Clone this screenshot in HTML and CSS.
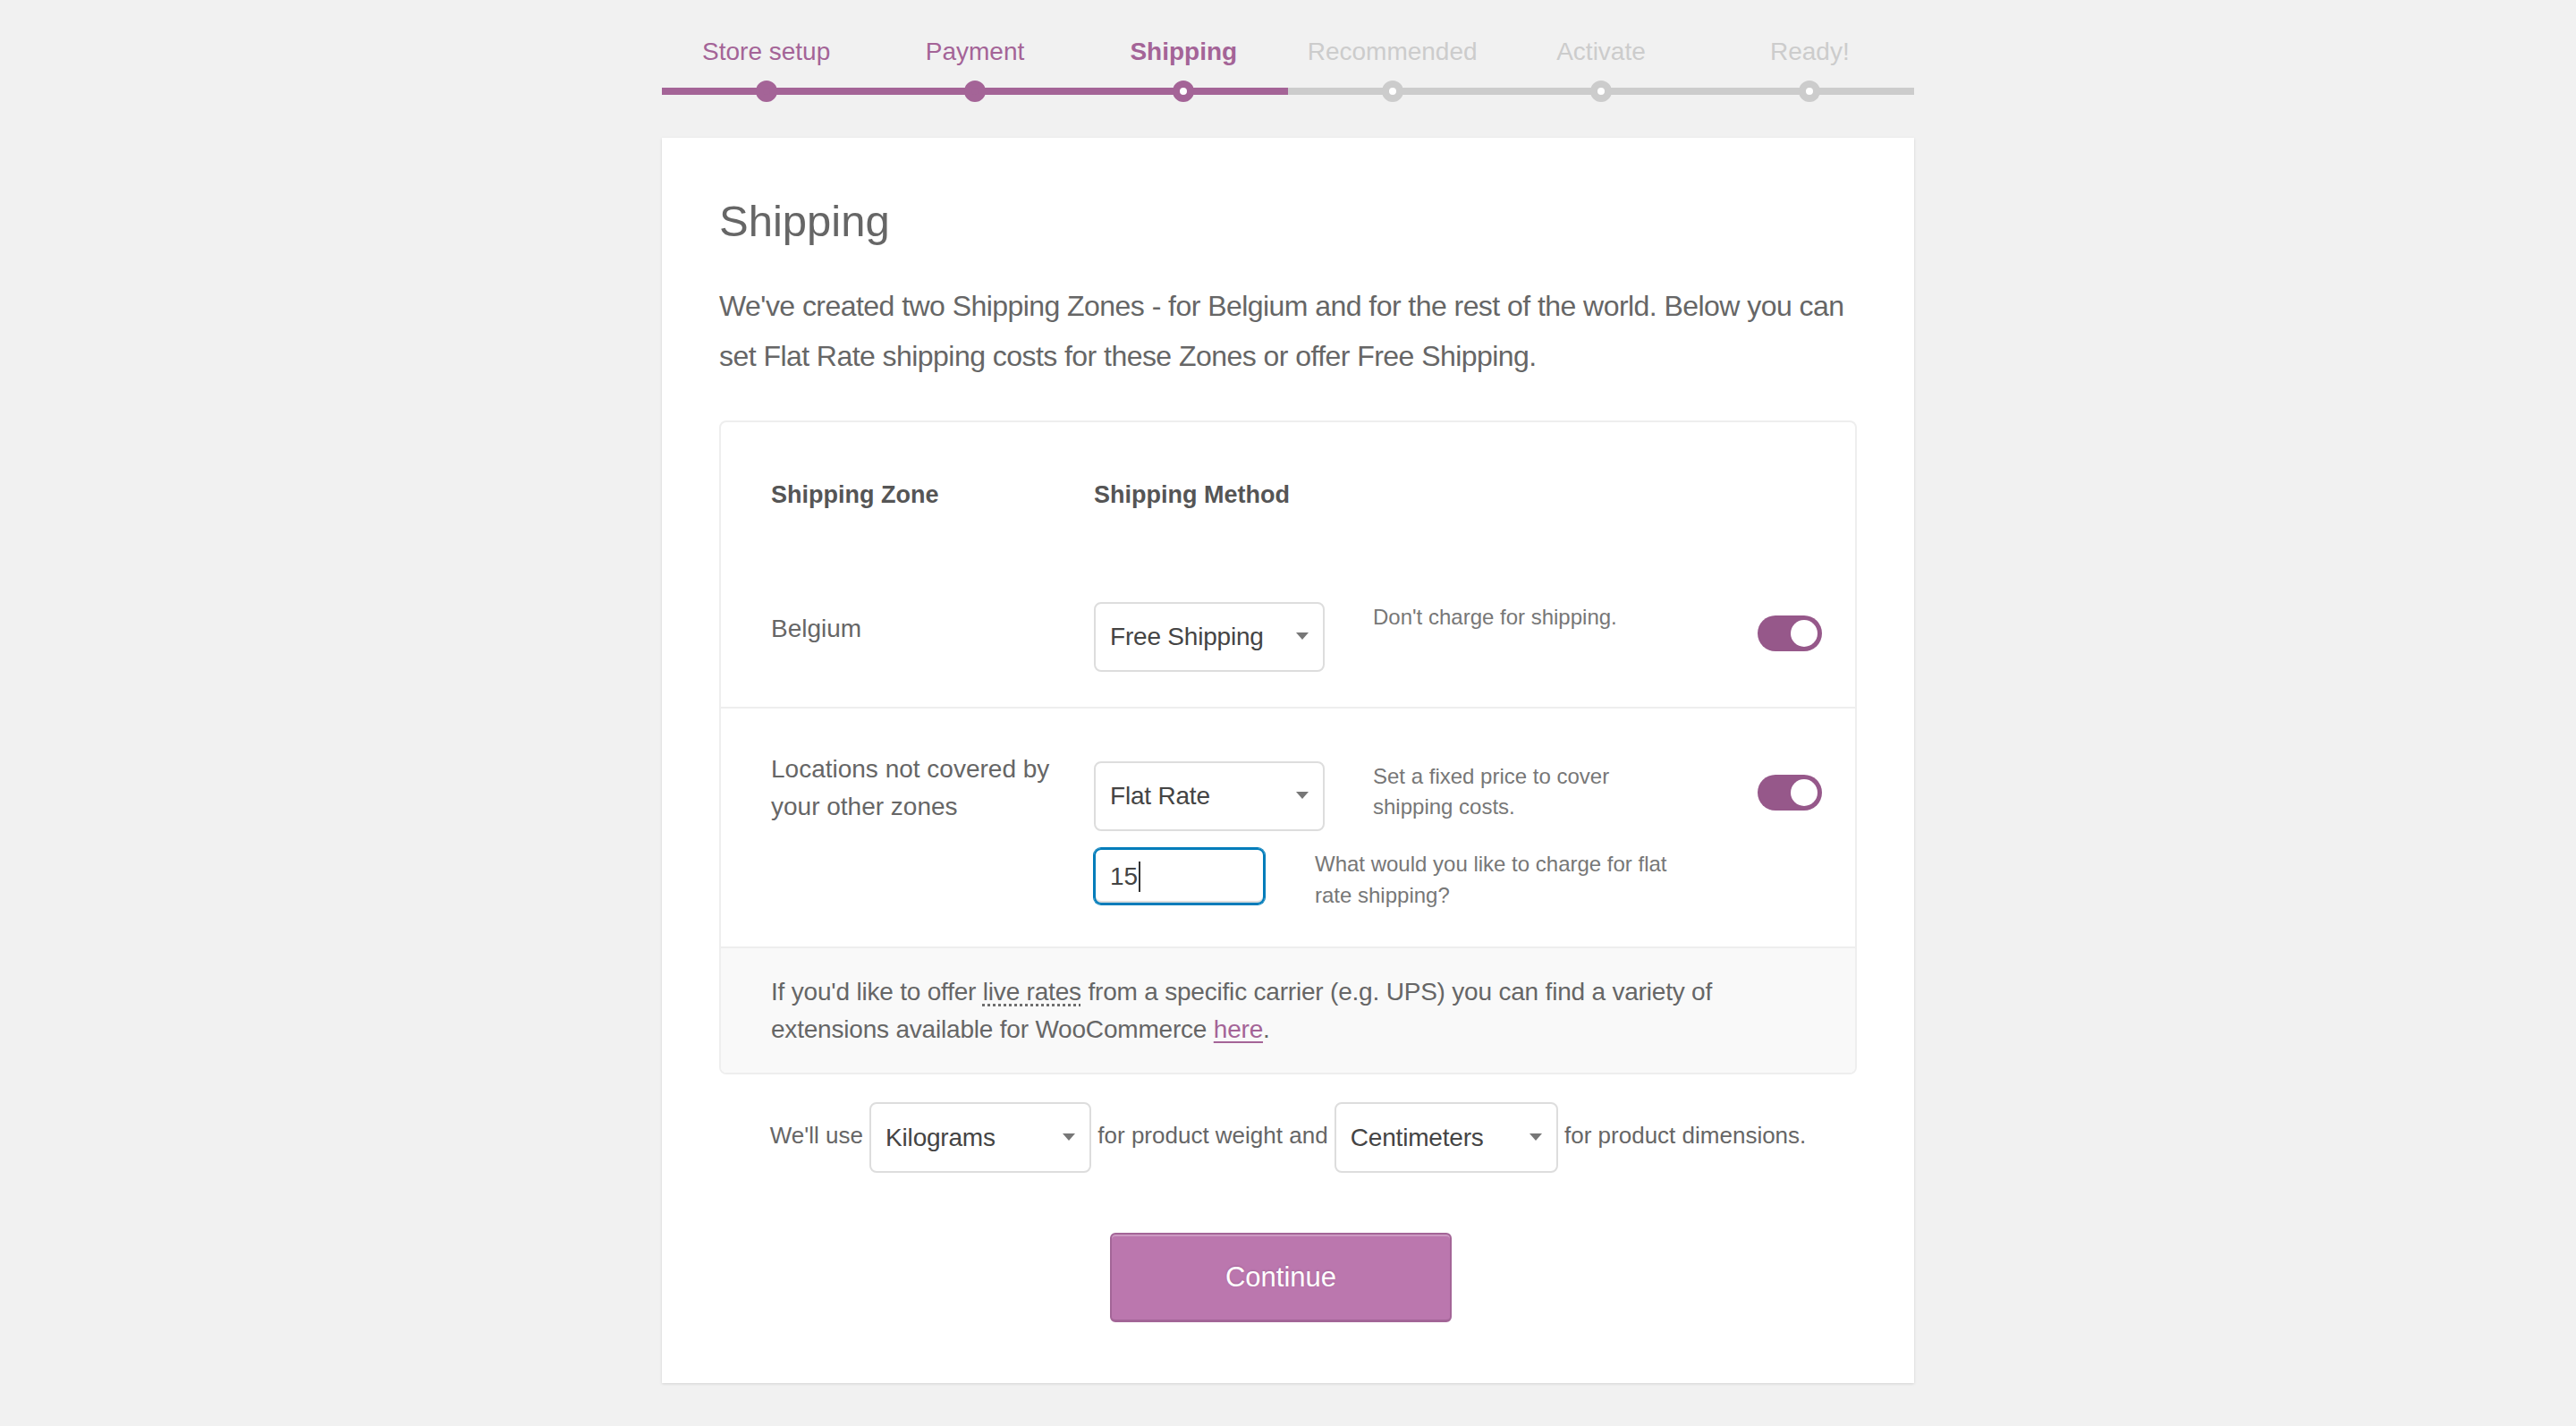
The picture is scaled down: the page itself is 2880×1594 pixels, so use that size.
FILE: index.html
```html
<!DOCTYPE html>
<html lang="en">
<head>
<meta charset="utf-8">
<title>Shipping – Setup Wizard</title>
<link rel="stylesheet" href="styles.css">
</head>
<body>
<div class="wizard">
  <ol class="steps">
    <li class="step done">Store setup</li>
    <li class="step done">Payment</li>
    <li class="step active">Shipping</li>
    <li class="step">Recommended</li>
    <li class="step">Activate</li>
    <li class="step">Ready!</li>
  </ol>

  <div class="card">
    <h1 class="title">Shipping</h1>
    <p class="intro">We've created two Shipping Zones - for Belgium and for the rest of the world. Below you can set Flat Rate shipping costs for these Zones or offer Free Shipping.</p>

    <div class="zones">
      <div class="zones-head">
        <div>Shipping Zone</div>
        <div>Shipping Method</div>
      </div>

      <div class="zone-row first">
        <div class="zone-name"><span>Belgium</span></div>
        <div class="select method"><span>Free Shipping</span></div>
        <div class="desc">Don't charge for shipping.</div>
        <div class="toggle"><span class="knob"></span></div>
      </div>

      <div class="zone-row second">
        <div class="zone-name"><span>Locations not covered by your other zones</span></div>
        <div class="select method"><span>Flat Rate</span></div>
        <div class="desc">Set a fixed price to cover shipping costs.</div>
        <div class="toggle"><span class="knob"></span></div>
        <div class="price-line">
          <div class="price-input">15<span class="caret"></span></div>
          <div class="desc wide">What would you like to charge for flat rate shipping?</div>
        </div>
      </div>

      <div class="zones-foot">If you'd like to offer <abbr class="abbr" title="Live rates">live rates</abbr> from a specific carrier (e.g. UPS) you can find a variety of extensions available for WooCommerce <a class="link" href="#">here</a>.</div>
    </div>

    <div class="units">We'll use <div class="select unit kg"><span>Kilograms</span></div> for product weight and <div class="select unit cm"><span>Centimeters</span></div> for product dimensions.</div>

    <div class="actions">
      <button class="btn" type="button">Continue</button>
    </div>
  </div>
</div>
</body>
</html>
```

FILE: styles.css
```css
html, body {
  margin: 0;
  padding: 0;
}

body {
  background: #f1f1f1;
  font-family: "Liberation Sans", Arial, sans-serif;
  color: #666;
  min-height: 1594px;
}

.wizard {
  width: 1400px;
  margin: 0 auto;
}

/* ---- steps ---- */
.steps {
  display: flex;
  list-style: none;
  margin: 0;
  padding: 0;
}

.step {
  flex: 1;
  position: relative;
  text-align: center;
  padding: 38px 0 20px;
  font-size: 28px;
  line-height: 40px;
  color: #ccc;
  border-bottom: 8px solid #ccc;
}

.step.done,
.step.active {
  color: #a46497;
  border-bottom-color: #a46497;
}

.step.active {
  font-weight: bold;
}

.step::before {
  content: "";
  position: absolute;
  left: 50%;
  bottom: -16px;
  width: 24px;
  height: 24px;
  margin-left: -12px;
  box-sizing: border-box;
  border-radius: 50%;
  background: #fff;
  border: 8px solid #ccc;
}

.step.done::before {
  background: #a46497;
  border-color: #a46497;
}

.step.active::before {
  border-color: #a46497;
}

/* ---- card ---- */
.card {
  margin-top: 48px;
  background: #fff;
  padding: 64px 64px 68px;
  box-shadow: 0 1px 3px rgba(0, 0, 0, 0.13);
}

.title {
  margin: 0;
  font-size: 49px;
  line-height: 58px;
  font-weight: normal;
  color: #666;
}

.intro {
  margin: 38px 0 44px;
  font-size: 32px;
  line-height: 56px;
  letter-spacing: -0.55px;
  color: #666;
}

/* ---- zones table ---- */
.zones {
  border: 2px solid #eee;
  border-radius: 8px;
  overflow: hidden;
}

.zones-head {
  display: grid;
  grid-template-columns: 361px 1fr;
  padding: 61px 37px 0 56px;
  font-size: 27px;
  line-height: 40px;
  font-weight: bold;
  color: #555;
}

.zone-row {
  display: grid;
  grid-template-columns: 361px 258px 1fr 72px;
  grid-template-rows: 78px;
  row-gap: 19px;
  padding: 0 37px 0 56px;
}

.zone-row.first {
  padding-top: 100px;
  padding-bottom: 39px;
}

.zone-row.second {
  border-top: 2px solid #eee;
  padding-top: 59px;
  padding-bottom: 47px;
}

.zone-name {
  grid-row: 1;
  height: 78px;
  box-sizing: border-box;
  display: flex;
  align-items: center;
  padding: 0 20px 18px 0;
  font-size: 28px;
  line-height: 42px;
  color: #666;
}

.select {
  position: relative;
  box-sizing: border-box;
  height: 78px;
  border: 2px solid #ddd;
  border-radius: 8px;
  background: #fff;
  padding: 0 40px 0 16px;
  display: flex;
  align-items: center;
  font-size: 28px;
  letter-spacing: -0.2px;
  color: #444;
  text-align: left;
}

.select::after {
  content: "";
  position: absolute;
  right: 16px;
  top: 50%;
  margin-top: -5px;
  border-left: 7px solid transparent;
  border-right: 7px solid transparent;
  border-top: 8px solid #777;
}

.method {
  grid-row: 1;
}

.desc {
  grid-row: 1;
  align-self: start;
  padding-left: 54px;
  max-width: 330px;
  font-size: 24px;
  line-height: 34px;
  color: #777;
}

.toggle {
  grid-row: 1;
  align-self: start;
  margin-top: 15px;
  width: 72px;
  height: 40px;
  border-radius: 20px;
  background: #96588a;
  display: flex;
  align-items: center;
  justify-content: flex-end;
  padding: 0 5px;
  box-sizing: border-box;
}

.knob {
  width: 30px;
  height: 30px;
  border-radius: 50%;
  background: #fff;
}

.price-line {
  grid-row: 2;
  grid-column: 2 / 4;
  height: 63px;
  display: flex;
  align-items: flex-start;
}

.price-input {
  box-sizing: border-box;
  width: 191px;
  height: 63px;
  border: 2px solid #007cba;
  border-radius: 8px;
  box-shadow: 0 0 0 1px #007cba, inset 0 -2px 0 #ddd;
  padding-left: 16px;
  display: flex;
  align-items: center;
  font-size: 28px;
  color: #444;
}

.caret {
  display: inline-block;
  width: 2px;
  height: 34px;
  margin-left: 1px;
  background: #333;
}

.desc.wide {
  padding-left: 56px;
  max-width: 420px;
  line-height: 35px;
}

.zones-foot {
  border-top: 2px solid #eee;
  background: #f9f9f9;
  padding: 28px 56px 27px;
  font-size: 28px;
  line-height: 42px;
  letter-spacing: -0.2px;
  color: #666;
}

.abbr {
  text-decoration: underline dotted;
  text-underline-offset: 4px;
}

.link {
  color: #a46497;
  text-decoration: underline;
  text-underline-offset: 4px;
}

/* ---- units ---- */
.units {
  margin-top: 31px;
  text-align: center;
  font-size: 26px;
  line-height: 42px;
  color: #666;
}

.unit {
  display: inline-flex;
  vertical-align: middle;
  height: 79px;
}

.kg {
  width: 248px;
}

.cm {
  width: 250px;
}

/* ---- actions ---- */
.actions {
  margin-top: 67px;
  display: flex;
  justify-content: center;
  padding-right: 16px;
}

.btn {
  width: 382px;
  height: 100px;
  box-sizing: border-box;
  background: #bb77ae;
  border: 2px solid #a36597;
  border-bottom-width: 3px;
  border-radius: 6px;
  box-shadow: inset 0 2px 0 rgba(255, 255, 255, 0.25);
  color: #fff;
  font-family: "Liberation Sans", Arial, sans-serif;
  font-size: 31px;
  text-shadow: 0 -1px 2px #a36597;
  cursor: pointer;
}
```
